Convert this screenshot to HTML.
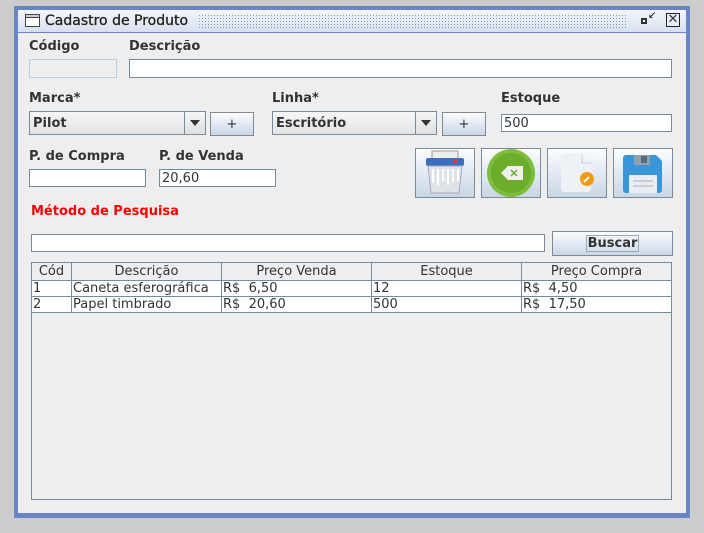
<!DOCTYPE html>
<html><head><meta charset="utf-8"><style>
*{box-sizing:border-box;margin:0;padding:0}
body{width:704px;height:533px;background:#cccccc;position:relative;overflow:hidden;font-family:"DejaVu Sans","Liberation Sans",sans-serif;font-size:13px;color:#333}
.a{position:absolute}
.lbl{position:absolute;font-weight:bold;font-size:13px;color:#333}
.tf{position:absolute;background:#fff;border:1px solid #7a8a99;height:18px;font-size:13px;padding-left:2px;line-height:18px;color:#333}
.btn{position:absolute;border:1px solid #7a8a99;background:linear-gradient(#fbfcfd,#dde6f0 60%,#c9d6e5);text-align:center}
.combo{position:absolute;height:24px;border:1px solid #7a8a99;background:linear-gradient(#f6f6f6,#e3e3e3);font-weight:bold;line-height:24px;padding-left:3px}
.arr{position:absolute;right:0;top:0;width:21px;height:22px;border-left:1px solid #7a8a99;background:linear-gradient(#f6f6f6,#e0e0e0)}
.arr:after{content:"";position:absolute;left:5px;top:8px;border-left:5px solid transparent;border-right:5px solid transparent;border-top:6px solid #333}
table{border-collapse:collapse;font-size:13px;color:#333}
td,th{border:1px solid #7a8a99;height:16px;line-height:15px;padding:0 1px;white-space:nowrap;font-weight:normal;vertical-align:bottom;overflow:hidden}
th{text-align:center;background:#eeeeee;height:18px;line-height:17px}
</style></head><body>
<div class="a" style="left:14px;top:6px;width:676px;height:512px;background:#6a86c4"></div>
<div class="a" style="left:18px;top:10px;width:668px;height:22px;background:linear-gradient(#f4f7fb,#d6e0ee)"></div>
<div class="a" style="left:18px;top:32px;width:668px;height:1px;background:#6a86c4"></div>
<div class="a" style="left:18px;top:33px;width:668px;height:480px;background:#eeeeee"></div>
<div class="a" style="left:25px;top:14px;width:15px;height:13px;border:1px solid #444;background:#fff"><div style="height:3px;border-bottom:1px solid #444;background:#ccc"></div></div>
<div class="a" style="left:45px;top:13px;font-size:14px;color:#222;-webkit-text-stroke:0.3px #222">Cadastro de Produto</div>
<div class="a" style="left:198px;top:14px;width:430px;height:14px;background-image:radial-gradient(#8a9bb8 0.6px,transparent 0.7px);background-size:3px 3px"></div>
<div class="a" style="left:641px;top:18px;width:6px;height:6px;border:2px solid #333;background:#fff"></div>
<div class="a" style="left:648px;top:10px;font-size:10px;color:#000">↙</div>
<div class="a" style="left:666px;top:13px;width:14px;height:14px;border:1px solid #222;background:#e8eef8;font-size:13px;line-height:12px;text-align:center">✕</div>
<div class="lbl" style="left:29px;top:39px">Código</div>
<div class="lbl" style="left:129px;top:39px">Descrição</div>
<div class="a" style="left:29px;top:59px;width:88px;height:19px;border:1px solid #b8cfe5;background:#eeeeee"></div>
<div class="tf" style="left:129px;top:59px;width:543px;height:19px"></div>
<div class="lbl" style="left:29px;top:91px">Marca*</div>
<div class="lbl" style="left:272px;top:91px">Linha*</div>
<div class="lbl" style="left:501px;top:91px">Estoque</div>
<div class="combo" style="left:29px;top:111px;width:177px">Pilot<div class="arr"></div></div>
<div class="btn" style="left:210px;top:112px;width:44px;height:24px;line-height:24px">+</div>
<div class="combo" style="left:272px;top:111px;width:165px">Escritório<div class="arr"></div></div>
<div class="btn" style="left:442px;top:112px;width:44px;height:24px;line-height:24px">+</div>
<div class="tf" style="left:501px;top:114px;width:171px">500</div>
<div class="lbl" style="left:29px;top:149px">P. de Compra</div>
<div class="lbl" style="left:159px;top:149px">P. de Venda</div>
<div class="tf" style="left:29px;top:169px;width:117px"></div>
<div class="tf" style="left:159px;top:169px;width:117px">20,60</div>
<div class="btn" style="left:415px;top:148px;width:60px;height:50px">
<svg width="58" height="48" viewBox="0 0 58 48"><rect x="16" y="2" width="26" height="10" fill="#eee" stroke="#999"/><rect x="10" y="9" width="38" height="8" rx="2" fill="#3a6fc0"/><rect x="37" y="11" width="4" height="3" fill="#e33"/><path d="M12 17h34l-3 27H15z" fill="#dfe3e8" stroke="#aab"/><path d="M17 20v14M22 20v16M27 20v12M32 20v16M37 20v13M42 20v12" stroke="#fff" stroke-width="2"/></svg></div>
<div class="btn" style="left:481px;top:148px;width:60px;height:50px">
<svg width="58" height="48" viewBox="0 0 58 48"><circle cx="29" cy="24" r="24" fill="#7cbd3a"/><circle cx="29" cy="24" r="20" fill="#6cae2c"/><path d="M19 24l7-7h15v14H26z" fill="#f0f0f0"/><path d="M29 21l6 6M35 21l-6 6" stroke="#6cae2c" stroke-width="1.5"/></svg></div>
<div class="btn" style="left:547px;top:148px;width:60px;height:50px">
<svg width="58" height="48" viewBox="0 0 58 48"><path d="M16 5h18l9 9v26a3 3 0 0 1-3 3H16a3 3 0 0 1-3-3V8a3 3 0 0 1 3-3z" fill="#eef1f6"/><path d="M34 5v9h9" fill="none" stroke="#ccd"/><circle cx="39" cy="30" r="7" fill="#f09a10"/><path d="M36 33l5-5" stroke="#fff" stroke-width="2"/></svg></div>
<div class="btn" style="left:613px;top:148px;width:60px;height:50px">
<svg width="58" height="48" viewBox="0 0 58 48"><path d="M12 6h30l6 6v29a3 3 0 0 1-3 3H12a3 3 0 0 1-3-3V9a3 3 0 0 1 3-3z" fill="#3a96d8"/><rect x="20" y="6" width="16" height="10" fill="#8fa0b0"/><rect x="27" y="7" width="6" height="7" fill="#5a6a7a"/><rect x="15" y="26" width="28" height="18" fill="#e9edf1"/><path d="M19 32h20M19 37h20" stroke="#aab"/></svg></div>
<div class="a" style="left:31px;top:204px;font-weight:bold;color:#f00;font-size:13px">Método de Pesquisa</div>
<div class="tf" style="left:31px;top:234px;width:514px"></div>
<div class="btn" style="left:552px;top:231px;width:121px;height:25px;line-height:23px;font-weight:bold"><span style="border:1px solid #9ab;padding:0 1px">Buscar</span></div>
<div class="a" style="left:31px;top:262px;width:641px;height:238px;border:1px solid #7a8a99;border-top:none;background:#eeeeee;overflow:hidden">
<table style="width:640px;table-layout:fixed;margin-left:-1px">
<colgroup><col style="width:40px"><col style="width:150px"><col style="width:150px"><col style="width:150px"><col style="width:150px"></colgroup>
<tr><th>Cód</th><th>Descrição</th><th>Preço Venda</th><th>Estoque</th><th>Preço Compra</th></tr>
<tr style="background:#fff"><td>1</td><td>Caneta esferográfica</td><td>R$&nbsp; 6,50</td><td>12</td><td>R$&nbsp; 4,50</td></tr>
<tr style="background:#fff"><td>2</td><td>Papel timbrado</td><td>R$&nbsp; 20,60</td><td>500</td><td>R$&nbsp; 17,50</td></tr>
</table></div>
</body></html>
